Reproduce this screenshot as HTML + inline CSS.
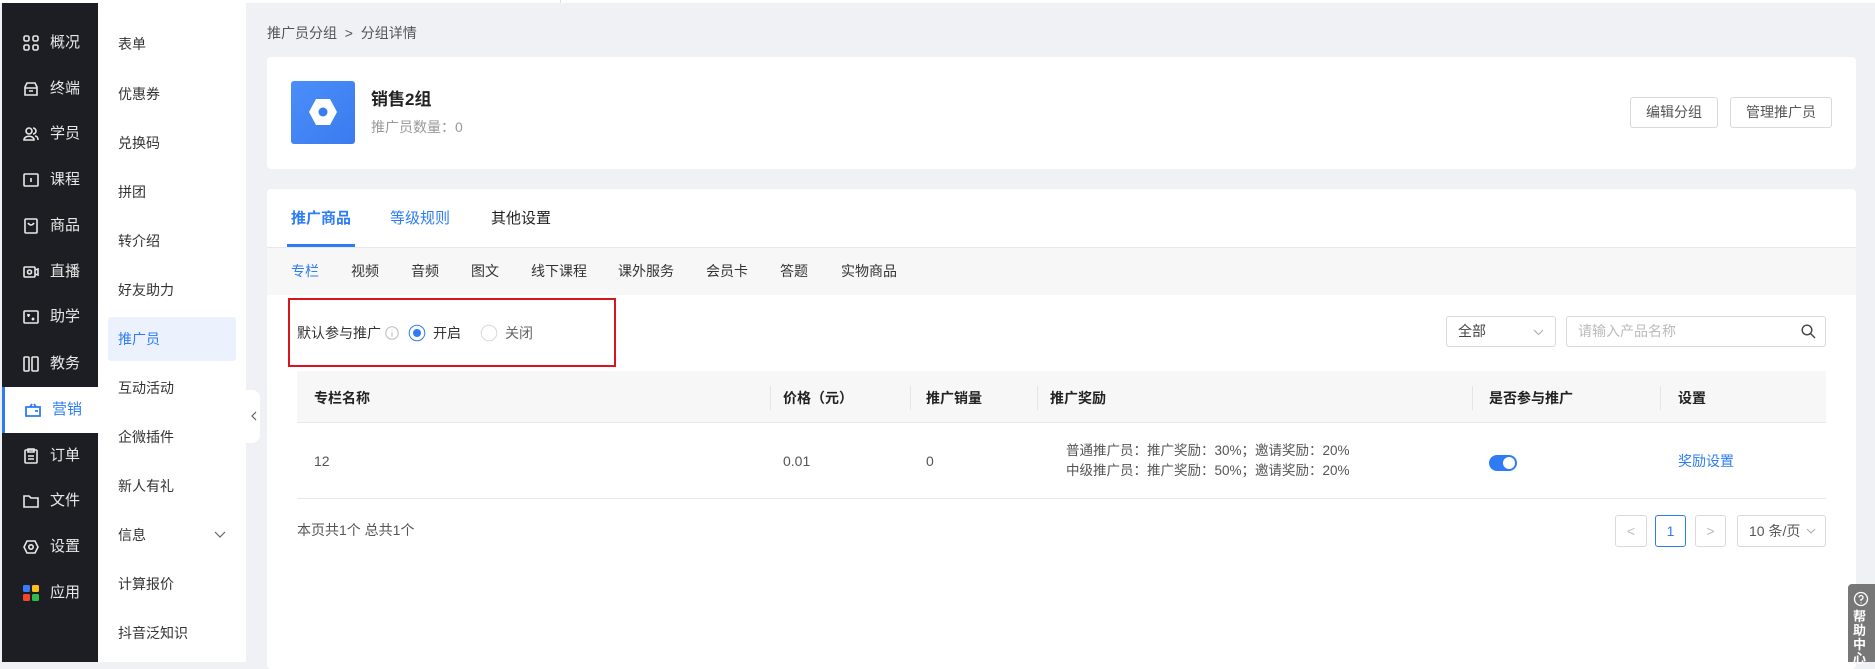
<!DOCTYPE html>
<html><head><meta charset="utf-8"><style>
*{margin:0;padding:0;box-sizing:border-box}
body{width:1875px;height:662px;overflow:hidden;background:#f0f1f4;font-family:"Liberation Sans","Noto Sans CJK SC",sans-serif;font-size:14px;color:#333;position:relative}
.a{position:absolute}
.top{left:0;top:0;width:1875px;height:3px;background:#fff}
.side{left:2px;top:3px;width:96px;height:659px;background:#1d1e23}
.si{position:absolute;left:2px;width:96px;height:46px;color:#e8e8e8;font-size:15px;line-height:46px}
.si span{position:absolute;left:48px}
.si svg{position:absolute;left:21px;top:15px}
.si.on{background:#fff;color:#2d7cf6;border-left:3px solid #2d7cf6}
.sub{left:98px;top:3px;width:148px;height:659px;background:#fff}
.sj{position:absolute;left:118px;font-size:14px;color:#333;line-height:20px}
.card{background:#fff;border-radius:4px}
.btn{position:absolute;border:1px solid #d9d9d9;border-radius:3px;background:#fff;font-size:14px;color:#555;text-align:center;line-height:29px}
.th{position:absolute;top:388px;font-weight:bold;font-size:14px;color:#222;line-height:20px}
.sep{position:absolute;top:386px;width:1px;height:24px;background:#e5e5e5}
.pg{position:absolute;top:515px;height:32px;border:1px solid #d9d9d9;border-radius:3px;text-align:center;line-height:30px;color:#bbb;background:#fff}
.t{position:absolute;line-height:20px}
</style></head><body>
<div class="a top"></div>
<div class="a" style="left:560px;top:0;width:1px;height:3px;background:#ddd"></div>
<div class="a side"></div>
<div class="si" style="top:20px"><svg width="16" height="16" fill="none" stroke="#e8e8e8" stroke-width="1.6"><rect x="1" y="1" width="5" height="5" rx="1.5"/><rect x="10" y="1" width="5" height="5" rx="1.5"/><rect x="1" y="10" width="5" height="5" rx="1.5"/><rect x="10" y="10" width="5" height="5" rx="1.5"/></svg><span>概况</span></div>
<div class="si" style="top:66px"><svg width="16" height="16" fill="none" stroke="#e8e8e8" stroke-width="1.6"><path d="M2 6 L4 2 H12 L14 6 V14 H2 Z M2 7 H14 M6 10 H10"/></svg><span>终端</span></div>
<div class="si" style="top:111px"><svg width="16" height="16" fill="none" stroke="#e8e8e8" stroke-width="1.6"><circle cx="6" cy="5" r="3"/><path d="M1 14 C1 9 11 9 11 14 Z M10 2 A3 3 0 0 1 10 8 M12 10 C14 10 15 12 15 14"/></svg><span>学员</span></div>
<div class="si" style="top:157px"><svg width="16" height="16" fill="none" stroke="#e8e8e8" stroke-width="1.6"><rect x="1" y="2" width="14" height="12" rx="1"/><path d="M8 6 V10"/></svg><span>课程</span></div>
<div class="si" style="top:203px"><svg width="16" height="16" fill="none" stroke="#e8e8e8" stroke-width="1.6"><rect x="2" y="1" width="12" height="14" rx="1"/><path d="M5 5 Q8 9 11 5"/></svg><span>商品</span></div>
<div class="si" style="top:249px"><svg width="16" height="16" fill="none" stroke="#e8e8e8" stroke-width="1.6"><rect x="1" y="3" width="11" height="10" rx="1"/><circle cx="6.5" cy="8" r="2"/><path d="M12 6 L15 5 V11 L12 10"/></svg><span>直播</span></div>
<div class="si" style="top:294px"><svg width="16" height="16" fill="none" stroke="#e8e8e8" stroke-width="1.6"><rect x="1" y="2" width="14" height="12" rx="1"/><path d="M4 6 H7 M5.5 5 V8 M9 9 L11 11 M11 9 L9 11"/></svg><span>助学</span></div>
<div class="si" style="top:341px"><svg width="16" height="16" fill="none" stroke="#e8e8e8" stroke-width="1.6"><rect x="1" y="1" width="5" height="14" rx="1"/><rect x="9" y="1" width="6" height="14" rx="1"/></svg><span>教务</span></div>
<div class="si on" style="top:387px"><svg width="16" height="16" fill="none" stroke="#2d7cf6" stroke-width="1.8" style="left:20px"><path d="M1 5 H15 V14 H1 Z M5 5 L7 2 M11 5 L9 2 M10 9 H13"/></svg><span style="left:47px">营销</span></div>
<div class="si" style="top:433px"><svg width="16" height="16" fill="none" stroke="#e8e8e8" stroke-width="1.6"><rect x="2" y="2" width="12" height="13" rx="1"/><path d="M5 1 H11 V4 H5 Z M5 8 H11 M5 11 H11"/></svg><span>订单</span></div>
<div class="si" style="top:478px"><svg width="16" height="16" fill="none" stroke="#e8e8e8" stroke-width="1.6"><path d="M1 3 H6 L8 5 H15 V14 H1 Z"/></svg><span>文件</span></div>
<div class="si" style="top:524px"><svg width="16" height="16" fill="none" stroke="#e8e8e8" stroke-width="1.6"><path d="M4 2 H12 L15 8 L12 14 H4 L1 8 Z"/><circle cx="8" cy="8" r="2.2"/></svg><span>设置</span></div>
<div class="si" style="top:570px"><svg width="16" height="16"><rect x="0" y="0" width="7" height="7" rx="1.5" fill="#3a7bfd"/><rect x="9" y="0" width="7" height="7" rx="1.5" fill="#fbbf1c"/><rect x="0" y="9" width="7" height="7" rx="1.5" fill="#f5462c"/><rect x="9" y="9" width="7" height="7" rx="1.5" fill="#28c04a"/></svg><span>应用</span></div>

<div class="a sub"></div>
<div class="a" style="left:108px;top:317px;width:128px;height:44px;background:#ebf2fe;border-radius:3px"></div>
<div class="sj" style="top:34px">表单</div>
<div class="sj" style="top:84px">优惠券</div>
<div class="sj" style="top:133px">兑换码</div>
<div class="sj" style="top:182px">拼团</div>
<div class="sj" style="top:231px">转介绍</div>
<div class="sj" style="top:280px">好友助力</div>
<div class="sj" style="top:329px;color:#2d7cf6">推广员</div>
<div class="sj" style="top:378px">互动活动</div>
<div class="sj" style="top:427px">企微插件</div>
<div class="sj" style="top:476px">新人有礼</div>
<div class="sj" style="top:525px">信息</div>
<div class="sj" style="top:574px">计算报价</div>
<div class="sj" style="top:623px">抖音泛知识</div>
<svg class="a" style="left:214px;top:531px" width="12" height="8" fill="none" stroke="#666" stroke-width="1.2"><path d="M1 1 L6 6 L11 1"/></svg>
<div class="a" style="left:246px;top:390px;width:14px;height:53px;background:#fff;border-radius:0 8px 8px 0"></div>
<svg class="a" style="left:251px;top:411px" width="6" height="10" fill="none" stroke="#666" stroke-width="1.2"><path d="M5 1 L1 5 L5 9"/></svg>

<div class="t" style="left:267px;top:23px;color:#555">推广员分组 &nbsp;&gt;&nbsp; 分组详情</div>

<div class="a card" style="left:267px;top:57px;width:1589px;height:112px"></div>
<div class="a" style="left:291px;top:81px;width:64px;height:63px;border-radius:3px;background:linear-gradient(135deg,#4b8ef8,#3a7bf0)"></div>
<svg class="a" style="left:308px;top:96px" width="30" height="32"><path d="M8 3 H22 L29 16 L22 29 H8 L1 16 Z" fill="#fff"/><circle cx="15" cy="16" r="4.5" fill="#3a7bf0"/></svg>
<div class="t" style="left:371px;top:89px;font-size:17px;font-weight:bold;color:#222;line-height:22px">销售2组</div>
<div class="t" style="left:371px;top:117px;color:#999">推广员数量：0</div>
<div class="btn" style="left:1630px;top:97px;width:88px;height:31px">编辑分组</div>
<div class="btn" style="left:1730px;top:97px;width:102px;height:31px">管理推广员</div>

<div class="a card" style="left:267px;top:189px;width:1589px;height:480px"></div>
<div class="t" style="left:291px;top:208px;font-size:15px;font-weight:bold;color:#2d7cf6;line-height:22px">推广商品</div>
<div class="a" style="left:287px;top:244px;width:68px;height:3px;background:#2d7cf6"></div>
<div class="t" style="left:390px;top:208px;font-size:15px;color:#2d7cf6;line-height:22px">等级规则</div>
<div class="t" style="left:491px;top:208px;font-size:15px;color:#222;line-height:22px">其他设置</div>
<div class="a" style="left:267px;top:247px;width:1589px;height:48px;background:#f7f7f8;border-top:1px solid #e8e8e8"></div>
<div class="t" style="left:291px;top:261px;color:#2d7cf6">专栏</div>
<div class="t" style="left:351px;top:261px">视频</div>
<div class="t" style="left:411px;top:261px">音频</div>
<div class="t" style="left:471px;top:261px">图文</div>
<div class="t" style="left:531px;top:261px">线下课程</div>
<div class="t" style="left:618px;top:261px">课外服务</div>
<div class="t" style="left:706px;top:261px">会员卡</div>
<div class="t" style="left:780px;top:261px">答题</div>
<div class="t" style="left:841px;top:261px">实物商品</div>

<div class="a" style="left:288px;top:298px;width:328px;height:69px;border:2px solid #d9141e"></div>
<div class="t" style="left:297px;top:323px">默认参与推广</div>
<svg class="a" style="left:385px;top:326px" width="14" height="14" fill="none" stroke="#bbb"><circle cx="7" cy="7" r="6.2"/><path d="M7 6 V10.5 M7 3.8 V4.6"/></svg>
<svg class="a" style="left:408px;top:324px" width="18" height="18"><circle cx="9" cy="9" r="7.8" fill="#fff" stroke="#2d7cf6"/><circle cx="9" cy="9" r="4" fill="#2d7cf6"/></svg>
<div class="t" style="left:433px;top:323px">开启</div>
<svg class="a" style="left:480px;top:324px" width="18" height="18"><circle cx="9" cy="9" r="7.8" fill="#fff" stroke="#d9d9d9"/></svg>
<div class="t" style="left:505px;top:323px;color:#666">关闭</div>

<div class="a" style="left:1446px;top:316px;width:110px;height:31px;border:1px solid #d9d9d9;border-radius:3px;background:#fff;padding-left:11px;line-height:29px;color:#444">全部</div>
<svg class="a" style="left:1533px;top:329px" width="11" height="7" fill="none" stroke="#aaa"><path d="M1 1 L5.5 5.5 L10 1"/></svg>
<div class="a" style="left:1566px;top:316px;width:260px;height:31px;border:1px solid #d9d9d9;border-radius:3px;background:#fff;padding-left:11px;line-height:29px;color:#bbb">请输入产品名称</div>
<svg class="a" style="left:1801px;top:324px" width="15" height="15" fill="none" stroke="#444" stroke-width="1.4"><circle cx="6" cy="6" r="4.8"/><path d="M9.5 9.5 L14 14"/></svg>

<div class="a" style="left:297px;top:371px;width:1529px;height:52px;background:#f7f7f8;border-bottom:1px solid #e8e8e8"></div>
<div class="th" style="left:314px">专栏名称</div>
<div class="sep" style="left:770px"></div><div class="th" style="left:783px">价格（元）</div>
<div class="sep" style="left:910px"></div><div class="th" style="left:926px">推广销量</div>
<div class="sep" style="left:1037px"></div><div class="th" style="left:1050px">推广奖励</div>
<div class="sep" style="left:1472px"></div><div class="th" style="left:1489px">是否参与推广</div>
<div class="sep" style="left:1660px"></div><div class="th" style="left:1678px">设置</div>
<div class="a" style="left:297px;top:498px;width:1529px;height:1px;background:#e8e8e8"></div>
<div class="t" style="left:314px;top:451px;color:#555">12</div>
<div class="t" style="left:783px;top:451px;color:#555">0.01</div>
<div class="t" style="left:926px;top:451px;color:#555">0</div>
<div class="t" style="left:1066px;top:441px;color:#555;font-size:13.5px">普通推广员：推广奖励：30%；邀请奖励：20%</div>
<div class="t" style="left:1066px;top:461px;color:#555;font-size:13.5px">中级推广员：推广奖励：50%；邀请奖励：20%</div>
<div class="a" style="left:1489px;top:455px;width:28px;height:16px;border-radius:8px;background:#2d7cf6"></div>
<div class="a" style="left:1503px;top:457px;width:12px;height:12px;border-radius:6px;background:#fff"></div>
<div class="t" style="left:1678px;top:451px;color:#2d7cf6">奖励设置</div>

<div class="t" style="left:297px;top:520px;color:#555">本页共1个 总共1个</div>
<div class="pg" style="left:1615px;width:32px">&lt;</div>
<div class="pg" style="left:1655px;width:31px;border-color:#2d7cf6;color:#2d7cf6">1</div>
<div class="pg" style="left:1695px;width:31px">&gt;</div>
<div class="pg" style="left:1737px;width:89px;color:#555;text-align:left;padding-left:11px">10 条/页</div>
<svg class="a" style="left:1806px;top:528px" width="10" height="6" fill="none" stroke="#aaa"><path d="M1 1 L5 5 L9 1"/></svg>

<div class="a" style="left:1848px;top:584px;width:27px;height:78px;background:#777;border-radius:4px 0 0 0"></div>
<svg class="a" style="left:1853px;top:591px" width="16" height="16" fill="none" stroke="#fff" stroke-width="1.3"><circle cx="8" cy="8" r="6.5"/><path d="M6 6.5 A2 2 0 1 1 8 8.5 V10 M8 11.5 V12.3"/></svg>
<div class="a" style="left:1853px;top:610px;width:16px;color:#fff;font-size:13px;font-weight:bold;line-height:14px">帮助中心</div>
</body></html>
